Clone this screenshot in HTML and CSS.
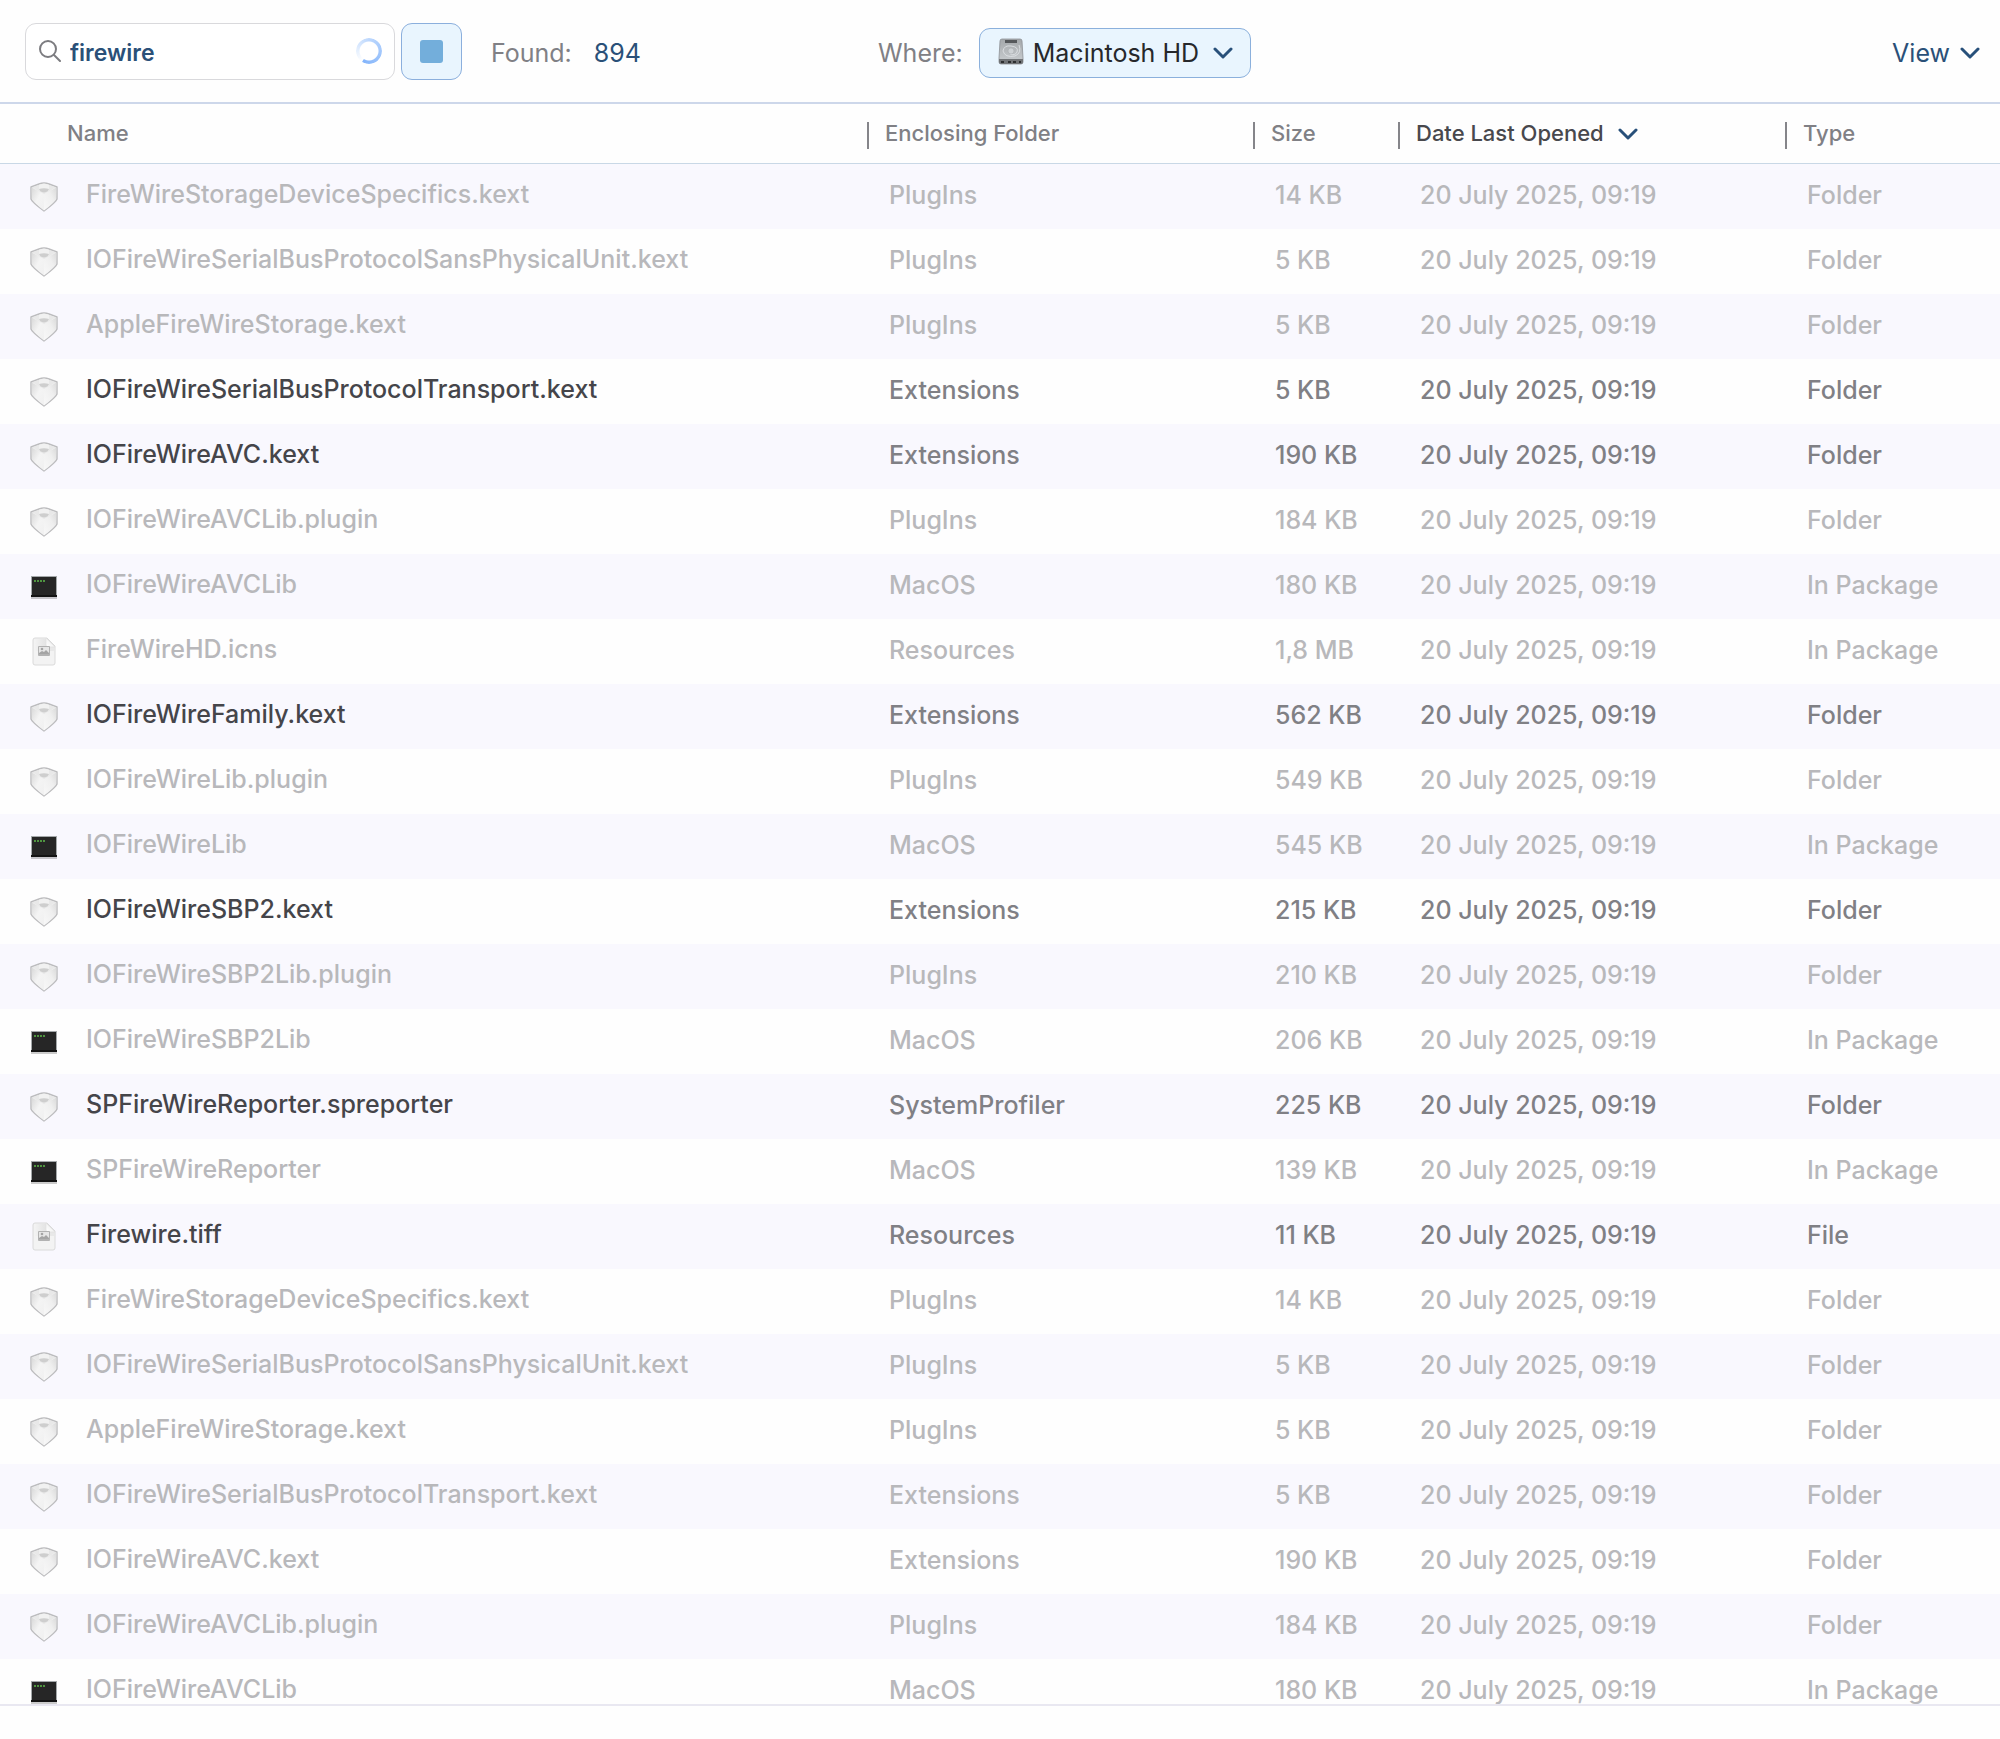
FILE: index.html
```html
<!DOCTYPE html>
<html lang="en">

<head>
    <meta charset="UTF-8">
    <meta name="viewport" content="width=device-width, initial-scale=1.0">
    <title>firewire</title>
    <link rel="stylesheet" href="styles.css">
</head>

<body>
    <!-- Shared icons -->
    <svg class="sprite" aria-hidden="true">
        <defs>
            <linearGradient id="kextLeft" x1="0" y1="0" x2="1" y2="1">
                <stop offset="0" stop-color="#d8d8d8" />
                <stop offset="0.5" stop-color="#f4f4f4" />
                <stop offset="1" stop-color="#f0f0f0" />
            </linearGradient>
            <linearGradient id="kextRight" x1="1" y1="0" x2="0" y2="1">
                <stop offset="0" stop-color="#d9d9d9" />
                <stop offset="0.4" stop-color="#efefef" />
                <stop offset="1" stop-color="#f8f8f8" />
            </linearGradient>
            <linearGradient id="fileFold" x1="0" y1="1" x2="1" y2="0">
                <stop offset="0" stop-color="#ffffff" />
                <stop offset="1" stop-color="#e8e8e8" />
            </linearGradient>
            <linearGradient id="filePage" x1="0" y1="0" x2="1" y2="0">
                <stop offset="0" stop-color="#f4f4f4" />
                <stop offset="0.5" stop-color="#e0e0e0" />
                <stop offset="1" stop-color="#e4e4e4" />
            </linearGradient>
            <linearGradient id="diskTop" x1="0" y1="0" x2="0" y2="1">
                <stop offset="0" stop-color="#a4a8ab" />
                <stop offset="1" stop-color="#cbcfd2" />
            </linearGradient>
        </defs>
        <symbol id="kext" viewBox="0 0 30 36">
            <path d="M2 8 L10 5 Q15 3 20 5 L28 8 V20 Q27 23 15 32 Q3 23 2 20 Z" fill="#f1f1f1" stroke="#bcbcbe" stroke-width="1.4" stroke-linejoin="round" />
            <path d="M2.5 8.5 L15 15 V31.5 Q4 23 3 20 Z" fill="url(#kextLeft)" />
            <path d="M27.5 8.5 L15 15 V31.5 Q26 23 27 20 Z" fill="url(#kextRight)" />
            <path d="M3 8.3 L11 5.5 H19 L27 8.3 L15 15 Z" fill="#e8e8e8" />
            <path d="M10 6 Q15 3 20 6 V11 Q15 14.5 10 11 Z" fill="#f1f1f1" />
            <path d="M10 10 Q15 8.5 20 10 Q19 13 15 13.5 Q11 13 10 10 Z" fill="#cecece" />
        </symbol>
        <symbol id="exec" viewBox="0 0 30 36">
            <rect x="2" y="27" width="26" height="3" fill="#000" opacity="0.2" />
            <path d="M2 7 H28 V28 H2 Z" fill="#a4a8aa" />
            <rect x="3" y="8" width="24" height="19" fill="#262626" />
            <rect x="2" y="26" width="26" height="2" fill="#141414" />
            <path d="M5 12 H16" stroke="#4f9440" stroke-width="2" stroke-dasharray="2 1" />
        </symbol>
        <symbol id="file" viewBox="0 0 30 36">
            <path d="M6 4 H18 L26 12 V29 Q26 31 24 31 H6 Q4 31 4 29 V6 Q4 4 6 4 Z" fill="#f3f3f3" stroke="#dadada" />
            <path d="M5 5 H18 V13 H25 V17 H5 Z" fill="url(#filePage)" opacity="0.7" />
            <path d="M17 4 L26 13 H19 Q17 13 17 11 Z" fill="url(#fileFold)" stroke="#dedede" stroke-width="0.7" />
            <rect x="9" y="12" width="12" height="10" rx="1" fill="#b2b2b2" />
            <rect x="10" y="13" width="10" height="7" fill="#e6e6e6" />
            <circle cx="13" cy="15" r="1.3" fill="#a4a4a4" />
            <path d="M10 20 V19 L13 17 L15 18 L17 16 L20 19 V20 Z" fill="#a4a4a4" />
        </symbol>
        <symbol id="chevron" viewBox="0 0 20 14">
            <path d="M2 3 L10 11 L18 3" fill="none" stroke="currentColor" stroke-width="3" stroke-linecap="round" stroke-linejoin="round" />
        </symbol>
    </svg>

    <header class="toolbar">
        <div class="searchBox">
            <svg class="searchIcon" viewBox="0 0 22 22" aria-hidden="true">
                <circle cx="9" cy="9" r="8" fill="none" stroke="#7c7c80" stroke-width="2" />
                <path d="M15 15 L21 21" stroke="#7c7c80" stroke-width="2" stroke-linecap="round" />
            </svg>
            <input type="text" id="search" value="firewire" aria-label="Search">
            <span class="spinner"></span>
        </div>
        <button class="stopBtn" type="button" aria-label="Stop"><span class="stopSquare"></span></button>
        <p class="found">Found: <output class="count" for="search">894</output></p>

        <div class="where">
            <label for="whereDropDown">Where:</label>
            <div class="whereBox">
                <svg class="diskIcon" viewBox="0 0 26 28" aria-hidden="true">
                    <path d="M4 1 H22 Q24 1 24 3 L25 20 V24 Q25 26 23 26 H3 Q1 26 1 24 V20 L2 3 Q2 1 4 1 Z" fill="url(#diskTop)" stroke="#8d9195" stroke-width="0.8" />
                    <path d="M1 21 H25 V24 Q25 26 23 26 H3 Q1 26 1 24 Z" fill="#707376" />
                    <path d="M3 24 H6 M10 24 H13 M15 24 H18 M21 24 H23" stroke="#2d2f31" stroke-width="2" />
                    <rect x="7" y="2" width="12" height="3" fill="#55585b" />
                    <path d="M21 7 Q24 15 17 18 Q7 20 5 13 Q6 7 13 8 Q21 9 19 14 Q17 18 12 16" fill="none" stroke="#dee1e4" stroke-width="0.9" />
                    <circle cx="13" cy="13" r="3" fill="#ced2d5" stroke="#a4a8ac" stroke-width="0.5" />
                </svg>
                <select id="whereDropDown" name="where">
                    <option value="Macintosh HD" selected>Macintosh HD</option>
                </select>
                <svg class="chevron whereChevron" aria-hidden="true"><use href="#chevron" /></svg>
            </div>
        </div>

        <button class="viewBtn" type="button" aria-haspopup="true">View <svg class="chevron" aria-hidden="true"><use href="#chevron" /></svg></button>
    </header>

    <main class="results">
        <table>
            <colgroup>
                <col class="colName">
                <col class="colFolder">
                <col class="colSize">
                <col class="colDate">
                <col class="colType">
            </colgroup>
            <thead>
                <tr>
                    <th scope="col">Name</th>
                    <th scope="col">Enclosing Folder</th>
                    <th scope="col">Size</th>
                    <th scope="col" class="sorted" aria-sort="descending">Date Last Opened <svg class="chevron" aria-hidden="true"><use href="#chevron" /></svg></th>
                    <th scope="col">Type</th>
                </tr>
            </thead>
            <tbody>
                <tr class="dim"><td><svg class="icon"><use href="#kext" /></svg>FireWireStorageDeviceSpecifics.kext</td><td>PlugIns</td><td>14 KB</td><td>20 July 2025, 09:19</td><td>Folder</td></tr>
                <tr class="dim"><td><svg class="icon"><use href="#kext" /></svg>IOFireWireSerialBusProtocolSansPhysicalUnit.kext</td><td>PlugIns</td><td>5 KB</td><td>20 July 2025, 09:19</td><td>Folder</td></tr>
                <tr class="dim"><td><svg class="icon"><use href="#kext" /></svg>AppleFireWireStorage.kext</td><td>PlugIns</td><td>5 KB</td><td>20 July 2025, 09:19</td><td>Folder</td></tr>
                <tr><td><svg class="icon"><use href="#kext" /></svg>IOFireWireSerialBusProtocolTransport.kext</td><td>Extensions</td><td>5 KB</td><td>20 July 2025, 09:19</td><td>Folder</td></tr>
                <tr><td><svg class="icon"><use href="#kext" /></svg>IOFireWireAVC.kext</td><td>Extensions</td><td>190 KB</td><td>20 July 2025, 09:19</td><td>Folder</td></tr>
                <tr class="dim"><td><svg class="icon"><use href="#kext" /></svg>IOFireWireAVCLib.plugin</td><td>PlugIns</td><td>184 KB</td><td>20 July 2025, 09:19</td><td>Folder</td></tr>
                <tr class="dim"><td><svg class="icon"><use href="#exec" /></svg>IOFireWireAVCLib</td><td>MacOS</td><td>180 KB</td><td>20 July 2025, 09:19</td><td>In Package</td></tr>
                <tr class="dim"><td><svg class="icon"><use href="#file" /></svg>FireWireHD.icns</td><td>Resources</td><td>1,8 MB</td><td>20 July 2025, 09:19</td><td>In Package</td></tr>
                <tr><td><svg class="icon"><use href="#kext" /></svg>IOFireWireFamily.kext</td><td>Extensions</td><td>562 KB</td><td>20 July 2025, 09:19</td><td>Folder</td></tr>
                <tr class="dim"><td><svg class="icon"><use href="#kext" /></svg>IOFireWireLib.plugin</td><td>PlugIns</td><td>549 KB</td><td>20 July 2025, 09:19</td><td>Folder</td></tr>
                <tr class="dim"><td><svg class="icon"><use href="#exec" /></svg>IOFireWireLib</td><td>MacOS</td><td>545 KB</td><td>20 July 2025, 09:19</td><td>In Package</td></tr>
                <tr><td><svg class="icon"><use href="#kext" /></svg>IOFireWireSBP2.kext</td><td>Extensions</td><td>215 KB</td><td>20 July 2025, 09:19</td><td>Folder</td></tr>
                <tr class="dim"><td><svg class="icon"><use href="#kext" /></svg>IOFireWireSBP2Lib.plugin</td><td>PlugIns</td><td>210 KB</td><td>20 July 2025, 09:19</td><td>Folder</td></tr>
                <tr class="dim"><td><svg class="icon"><use href="#exec" /></svg>IOFireWireSBP2Lib</td><td>MacOS</td><td>206 KB</td><td>20 July 2025, 09:19</td><td>In Package</td></tr>
                <tr><td><svg class="icon"><use href="#kext" /></svg>SPFireWireReporter.spreporter</td><td>SystemProfiler</td><td>225 KB</td><td>20 July 2025, 09:19</td><td>Folder</td></tr>
                <tr class="dim"><td><svg class="icon"><use href="#exec" /></svg>SPFireWireReporter</td><td>MacOS</td><td>139 KB</td><td>20 July 2025, 09:19</td><td>In Package</td></tr>
                <tr><td><svg class="icon"><use href="#file" /></svg>Firewire.tiff</td><td>Resources</td><td>11 KB</td><td>20 July 2025, 09:19</td><td>File</td></tr>
                <tr class="dim"><td><svg class="icon"><use href="#kext" /></svg>FireWireStorageDeviceSpecifics.kext</td><td>PlugIns</td><td>14 KB</td><td>20 July 2025, 09:19</td><td>Folder</td></tr>
                <tr class="dim"><td><svg class="icon"><use href="#kext" /></svg>IOFireWireSerialBusProtocolSansPhysicalUnit.kext</td><td>PlugIns</td><td>5 KB</td><td>20 July 2025, 09:19</td><td>Folder</td></tr>
                <tr class="dim"><td><svg class="icon"><use href="#kext" /></svg>AppleFireWireStorage.kext</td><td>PlugIns</td><td>5 KB</td><td>20 July 2025, 09:19</td><td>Folder</td></tr>
                <tr class="dim"><td><svg class="icon"><use href="#kext" /></svg>IOFireWireSerialBusProtocolTransport.kext</td><td>Extensions</td><td>5 KB</td><td>20 July 2025, 09:19</td><td>Folder</td></tr>
                <tr class="dim"><td><svg class="icon"><use href="#kext" /></svg>IOFireWireAVC.kext</td><td>Extensions</td><td>190 KB</td><td>20 July 2025, 09:19</td><td>Folder</td></tr>
                <tr class="dim"><td><svg class="icon"><use href="#kext" /></svg>IOFireWireAVCLib.plugin</td><td>PlugIns</td><td>184 KB</td><td>20 July 2025, 09:19</td><td>Folder</td></tr>
                <tr class="dim"><td><svg class="icon"><use href="#exec" /></svg>IOFireWireAVCLib</td><td>MacOS</td><td>180 KB</td><td>20 July 2025, 09:19</td><td>In Package</td></tr>
            </tbody>
        </table>
    </main>
    <footer class="statusBar"></footer>
</body>

</html>
```
FILE: styles.css
```css
* {
    box-sizing: border-box;
}

body {
    margin: 0;
    height: 100vh;
    display: flex;
    flex-direction: column;
    background-color: #fefefe;
    color: #808085;
    font-family: Inter, "Liberation Sans", sans-serif;
    font-size: 25px;
    line-height: 32px;
}

.sprite {
    position: absolute;
    width: 0;
    height: 0;
}

.chevron {
    width: 20px;
    height: 14px;
    color: #28507a;
}

/* Toolbar */
.toolbar {
    display: flex;
    align-items: center;
    flex: none;
    height: 104px;
    padding: 0 20px 0 25px;
    border-bottom: 2px solid #cdd7ea;
}

.searchBox {
    display: flex;
    align-items: center;
    width: 370px;
    height: 57px;
    padding: 0 12px 0 13px;
    border: 1px solid #d9d9dc;
    border-radius: 11px;
    background-color: #fff;
}

.searchIcon {
    flex: none;
    width: 22px;
    height: 22px;
}

.searchBox input {
    flex: 1;
    min-width: 0;
    padding: 3px 0 0 9px;
    border: none;
    outline: none;
    background: none;
    color: #2a5078;
    font: inherit;
    font-size: 23px;
    font-weight: 600;
}

/* Ring that fades out towards its tail */
.spinner {
    flex: none;
    width: 26px;
    height: 26px;
    border-radius: 50%;
    background: conic-gradient(#bcd7fd, #84b5fb 210deg, transparent 215deg, #e6f0fe 270deg, #bcd7fd);
    -webkit-mask: radial-gradient(circle, transparent 9px, #000 10px);
    mask: radial-gradient(circle, transparent 9px, #000 10px);
}

.stopBtn {
    display: flex;
    align-items: center;
    justify-content: center;
    width: 61px;
    height: 57px;
    margin-left: 6px;
    padding: 0;
    border: 1px solid #8bafdd;
    border-radius: 11px;
    background-color: #e9f5fe;
}

.stopSquare {
    width: 23px;
    height: 23px;
    border-radius: 3px;
    background-color: #73aedb;
}

.found,
.where,
.viewBtn {
    margin-top: 4px;
    margin-bottom: 0;
}

.found {
    margin-left: 29px;
}

.count {
    margin-left: 15px;
    color: #2a5078;
}

.where {
    display: flex;
    align-items: center;
    gap: 16px;
    margin-left: 237px;
}

.whereBox {
    position: relative;
}

.whereBox select {
    width: 272px;
    height: 50px;
    padding: 0 0 0 53px;
    border: 1px solid #8bb0dc;
    border-radius: 11px;
    background-color: #e9f5fe;
    color: #26282b;
    font: inherit;
    appearance: none;
}

.diskIcon {
    position: absolute;
    top: 10px;
    left: 19px;
    width: 26px;
    height: 28px;
}

.whereChevron {
    position: absolute;
    top: 18px;
    right: 18px;
}

.viewBtn {
    display: flex;
    align-items: center;
    gap: 10px;
    margin-left: auto;
    padding: 0;
    border: none;
    background: none;
    color: #2a5078;
    font: inherit;
}

/* Result list */
.results {
    flex: 1;
    min-height: 0;
    overflow: hidden;
}

table {
    width: 100%;
    table-layout: fixed;
    border-collapse: separate;
    border-spacing: 0;
}

.colFolder {
    width: 386px;
}

.colSize {
    width: 145px;
}

.colDate {
    width: 387px;
}

.colType {
    width: 215px;
}

th {
    height: 60px;
    padding: 0 0 1px;
    border-bottom: 1px solid #c9d8e6;
    font-size: 22px;
    font-weight: 500;
    text-align: left;
    white-space: nowrap;
}

th:first-child {
    padding-left: 67px;
}

/* Divider between the column titles */
th + th::before {
    content: "";
    display: inline-block;
    width: 2px;
    height: 27px;
    margin-right: 16px;
    background-color: #85858a;
    vertical-align: middle;
}

th.sorted {
    color: #48484d;
}

th .chevron {
    margin-left: 8px;
}

td {
    height: 65px;
    padding: 0 0 3px 22px;
    font-weight: 500;
    white-space: nowrap;
}

td:first-child {
    padding-bottom: 0;
    padding-left: 29px;
    color: #45454a;
}

tbody tr:nth-child(odd) {
    background-color: #f9f8fe;
}

.dim td,
.dim td:first-child {
    color: #b8b8bb;
}

.icon {
    width: 30px;
    height: 36px;
    margin-right: 27px;
    vertical-align: middle;
}

.statusBar {
    flex: none;
    height: 35px;
    border-top: 2px solid #e9e8f1;
}
```
